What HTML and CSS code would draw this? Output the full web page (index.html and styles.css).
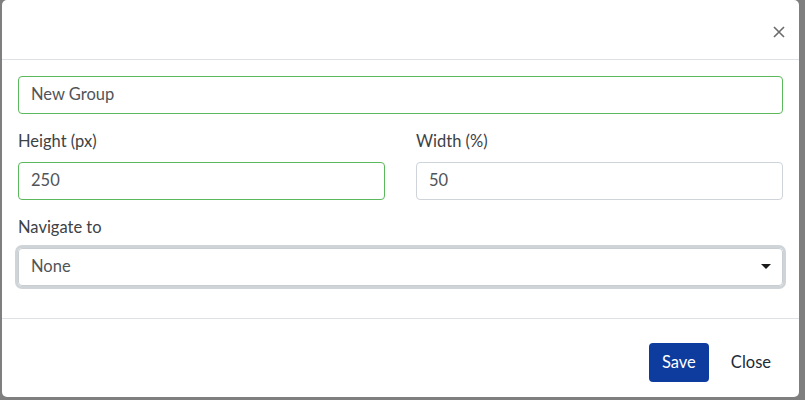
FILE: index.html
```html
<!DOCTYPE html>
<html>
<head>
<meta charset="utf-8">
<link rel="stylesheet" href="styles.css">
</head>
<body>
<div class="modal">
  <div class="modal-header">
    <button class="close" aria-label="Close">
      <svg width="12" height="12" viewBox="0 0 12 12"><path d="M1 1L11 11M11 1L1 11" stroke="#6b6b6b" stroke-width="1.6" fill="none"/></svg>
    </button>
  </div>
  <div class="modal-body">
    <div class="form-group">
      <div class="input valid">New Group</div>
    </div>
    <div class="row">
      <div class="col form-group">
        <div class="label">Height (px)</div>
        <div class="input valid">250</div>
      </div>
      <div class="col form-group">
        <div class="label">Width (%)</div>
        <div class="input">50</div>
      </div>
    </div>
    <div class="form-group last">
      <div class="label">Navigate to</div>
      <div class="input select"><span>None</span><span class="caret"></span></div>
    </div>
  </div>
  <div class="modal-footer">
    <button class="btn btn-primary">Save</button>
    <button class="btn btn-link">Close</button>
  </div>
</div>
</body>
</html>
```
FILE: styles.css
```css
* { box-sizing: border-box; }
html, body { margin: 0; padding: 0; }
body {
  background: #7f7f7f;
  width: 805px;
  height: 400px;
  overflow: hidden;
  font-family: "Lato", "Noto Sans", sans-serif;
  font-size: 16.5px;
  color: #3a3f44;
}
.modal {
  margin-left: 2px;
  width: 797px;
  height: 397px;
  background: #fff;
  border-radius: 5px;
  display: flex;
  flex-direction: column;
}
.modal-header {
  height: 60px;
  border-bottom: 1px solid #dee2e6;
  display: flex;
  justify-content: flex-end;
  align-items: flex-start;
  padding: 26px 14px 0 0;
}
.close {
  border: 0;
  background: transparent;
  padding: 0;
  width: 12px;
  height: 12px;
  display: flex;
}
.modal-body {
  padding: 16px 16px;
}
.form-group { margin-bottom: 16px; }
.form-group.last { margin-bottom: 0; }
.row {
  display: grid;
  grid-template-columns: 1fr 1fr;
  column-gap: 31px;
}
.label {
  height: 24px;
  line-height: 22px;
  margin-bottom: 8px;
  color: #3d4246;
}
.input {
  height: 38px;
  border: 1px solid #ced4da;
  border-radius: 4px;
  padding: 0 12px 2px;
  display: flex;
  align-items: center;
  color: #505458;
}
.input.valid { border-color: #5cb85c; }
.select {
  justify-content: space-between;
  box-shadow: 0 0 0 3px #cfd4d8;
  border-color: #c8cdd2;
  padding-right: 11px;
}
.caret {
  width: 0;
  height: 0;
  border-left: 5px solid transparent;
  border-right: 5px solid transparent;
  border-top: 5px solid #1a1a1a;
}
.modal-footer {
  margin-top: 16px;
  border-top: 1px solid #dee2e6;
  padding: 24px 16px 0 0;
  display: flex;
  justify-content: flex-end;
  gap: 12px;
}
.btn {
  height: 39px;
  border: 0;
  border-radius: 4px;
  padding: 0 12px 2px;
  font-family: inherit;
  font-size: 16.5px;
  background: transparent;
}
.btn-primary {
  background: #0d3c9e;
  color: #fff;
  width: 60px;
}
.btn-link { color: #212a38; padding: 0 12px 2px 10px; }
```
